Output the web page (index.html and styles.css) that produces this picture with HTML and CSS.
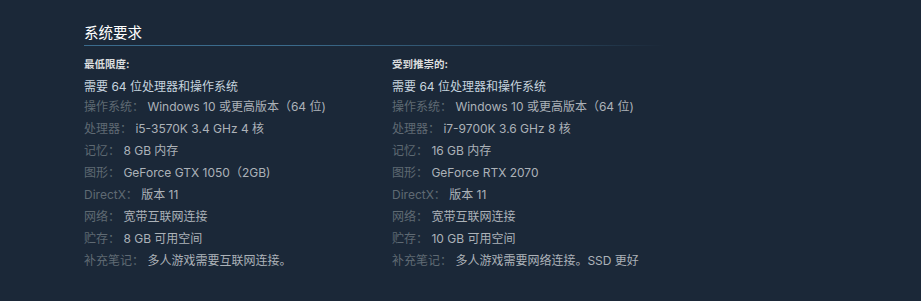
FILE: index.html
```html
<!DOCTYPE html>
<html lang="zh-CN">
<head>
<meta charset="utf-8">
<link rel="stylesheet" href="styles.css">
</head>
<body>
<div class="sysreq">
  <h2 class="title">系统要求</h2>
  <div class="cols">
    <div class="col">
      <div class="col-head">最低限度:</div>
      <ul class="list">
        <li class="first">需要 64 位处理器和操作系统</li>
        <li><span class="lab">操作系统：</span> Windows 10 或更高版本（64 位)</li>
        <li><span class="lab">处理器：</span> i5-3570K 3.4 GHz 4 核</li>
        <li><span class="lab">记忆：</span> 8 GB 内存</li>
        <li><span class="lab">图形：</span> GeForce GTX 1050（2GB)</li>
        <li><span class="lab">DirectX：</span> 版本 11</li>
        <li><span class="lab">网络：</span> 宽带互联网连接</li>
        <li><span class="lab">贮存：</span> 8 GB 可用空间</li>
        <li><span class="lab">补充笔记：</span> 多人游戏需要互联网连接。</li>
      </ul>
    </div>
    <div class="col">
      <div class="col-head">受到推崇的:</div>
      <ul class="list">
        <li class="first">需要 64 位处理器和操作系统</li>
        <li><span class="lab">操作系统：</span> Windows 10 或更高版本（64 位)</li>
        <li><span class="lab">处理器：</span> i7-9700K 3.6 GHz 8 核</li>
        <li><span class="lab">记忆：</span> 16 GB 内存</li>
        <li><span class="lab">图形：</span> GeForce RTX 2070</li>
        <li><span class="lab">DirectX：</span> 版本 11</li>
        <li><span class="lab">网络：</span> 宽带互联网连接</li>
        <li><span class="lab">贮存：</span> 10 GB 可用空间</li>
        <li><span class="lab">补充笔记：</span> 多人游戏需要网络连接。SSD 更好</li>
      </ul>
    </div>
  </div>
</div>
</body>
</html>
```
FILE: styles.css
```css
html, body {
  margin: 0;
  padding: 0;
  background: #1b2838;
  height: 100%;
}
body {
  font-family: Inter, "Noto Sans CJK SC", sans-serif;
  color: #acb2b8;
}
.sysreq {
  padding: 22px 0 0 84px;
}
.title {
  margin: 0;
  width: 580px;
  font-size: 14.5px;
  font-weight: normal;
  color: #ffffff;
  line-height: 22px;
  padding-bottom: 1px;
  background-image: linear-gradient(to right, #3b6b8c 0%, #3b6b8c 35%, rgba(59,107,140,0.35) 85%, rgba(59,107,140,0) 100%);
  background-size: 100% 1px;
  background-repeat: no-repeat;
  background-position: left bottom;
  height: 23px;
}
.cols {
  display: grid;
  grid-template-columns: 308px 308px;
  margin-top: 12px;
}
.col-head {
  font-size: 10.5px;
  font-weight: bold;
  color: #dcdedf;
  line-height: 14px;
  margin-bottom: 5px;
}
.list {
  list-style: none;
  margin: 0;
  padding: 0;
  font-size: 12px;
}
.list li {
  line-height: 22px;
  white-space: nowrap;
}
.list li.first {
  line-height: 19px;
  color: #c6d4df;
}
.lab {
  color: #5f6a73;
}
```
